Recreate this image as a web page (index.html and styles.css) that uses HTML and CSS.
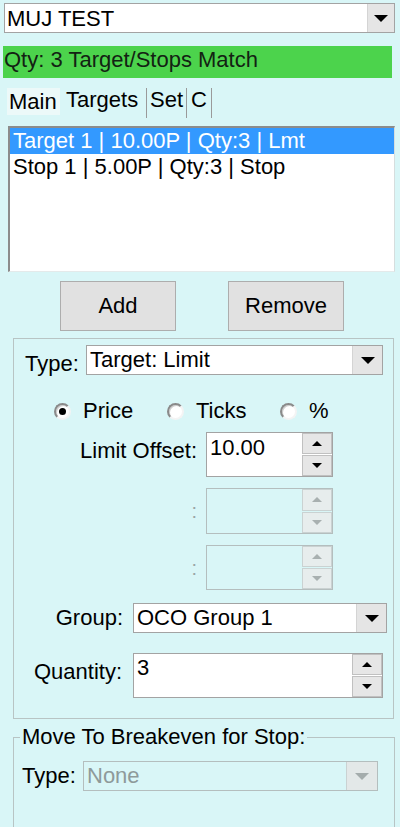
FILE: index.html
```html
<!DOCTYPE html>
<html>
<head>
<meta charset="utf-8">
<link rel="stylesheet" href="styles.css">
</head>
<body>
<div class="combo top">
  <div class="combo-text">MUJ TEST</div>
  <div class="combo-btn"><span class="tri-down"></span></div>
</div>
<div class="status">Qty: 3 Target/Stops Match</div>
<div class="tabs">
  <div class="tab tab-main">Main</div>
  <div class="tab tab-targets">Targets</div>
  <div class="tab tab-set">Set</div>
  <div class="tab tab-c">C</div>
</div>
<div class="list">
  <div class="item selected">Target 1 | 10.00P | Qty:3 | Lmt</div>
  <div class="item">Stop 1 | 5.00P | Qty:3 | Stop</div>
</div>
<div class="buttons">
  <button class="btn">Add</button>
  <button class="btn">Remove</button>
</div>
<div class="group">
  <div class="row row-type">
    <span class="lbl lbl-type">Type:</span>
    <div class="combo combo-type">
      <div class="combo-text">Target: Limit</div>
      <div class="combo-btn"><span class="tri-down"></span></div>
    </div>
  </div>
  <div class="radios">
    <div class="radio"><span class="circle checked"></span>Price</div>
    <div class="radio"><span class="circle"></span>Ticks</div>
    <div class="radio"><span class="circle"></span>%</div>
  </div>
  <div class="row row-offset">
    <span class="lbl lbl-offset">Limit Offset:</span>
    <div class="spin spin-offset">
      <div class="spin-field">10.00</div>
      <div class="spin-btns">
        <div class="spin-btn"><span class="tri-up-s"></span></div>
        <div class="spin-btn"><span class="tri-down-s"></span></div>
      </div>
    </div>
  </div>
  <div class="row row-dis1">
    <span class="lbl lbl-colon">:</span>
    <div class="spin spin-offset disabled">
      <div class="spin-field"></div>
      <div class="spin-btns">
        <div class="spin-btn"><span class="tri-up-s"></span></div>
        <div class="spin-btn"><span class="tri-down-s"></span></div>
      </div>
    </div>
  </div>
  <div class="row row-dis2">
    <span class="lbl lbl-colon">:</span>
    <div class="spin spin-offset disabled">
      <div class="spin-field"></div>
      <div class="spin-btns">
        <div class="spin-btn"><span class="tri-up-s"></span></div>
        <div class="spin-btn"><span class="tri-down-s"></span></div>
      </div>
    </div>
  </div>
  <div class="row row-group">
    <span class="lbl lbl-group">Group:</span>
    <div class="combo combo-group">
      <div class="combo-text">OCO Group 1</div>
      <div class="combo-btn"><span class="tri-down"></span></div>
    </div>
  </div>
  <div class="row row-qty">
    <span class="lbl lbl-qty">Quantity:</span>
    <div class="spin spin-qty">
      <div class="spin-field">3</div>
      <div class="spin-btns">
        <div class="spin-btn"><span class="tri-up-s"></span></div>
        <div class="spin-btn"><span class="tri-down-s"></span></div>
      </div>
    </div>
  </div>
</div>
<fieldset class="group2">
  <legend>Move To Breakeven for Stop:</legend>
  <div class="row row-be">
    <span class="lbl lbl-be">Type:</span>
    <div class="combo combo-be disabled">
      <div class="combo-text">None</div>
      <div class="combo-btn"><span class="tri-down"></span></div>
    </div>
  </div>
</fieldset>
</body>
</html>
```
FILE: styles.css
```css
* { box-sizing: border-box; }
html, body { margin: 0; padding: 0; }
body {
  background: #d9f6f7;
  font-family: "Liberation Sans", Arial, sans-serif;
  font-size: 22px;
  color: #000;
  width: 400px;
  height: 827px;
  overflow: hidden;
}

/* combo boxes */
.combo {
  display: flex;
  height: 30px;
  border: 1px solid #a3a3a3;
  background: #fff;
}
.combo-text {
  flex: 1;
  line-height: 28px;
  padding-left: 3px;
  white-space: nowrap;
  overflow: hidden;
}
.combo-btn {
  width: 30px;
  background: #e5e5e5;
  border-left: 1px solid #d4d4d4;
  display: flex;
  align-items: center;
  justify-content: center;
}
.tri-down {
  width: 0; height: 0;
  border-left: 7px solid transparent;
  border-right: 7px solid transparent;
  border-top: 7px solid #000;
}
.top { margin: 3px 5px 0 4px; }
.top .combo-text { padding-left: 2px; padding-top: 1px; }
.top .combo-btn { width: 27px; }

/* status */
.status {
  margin: 13px 0 0 3px;
  width: 389px;
  height: 32px;
  background: #4cd34c;
  color: #132213;
  line-height: 28px;
  padding-left: 1px;
  white-space: nowrap;
}

/* tabs */
.tabs {
  display: flex;
  margin-top: 10px;
  height: 30px;
  padding-left: 7px;
}
.tab {
  height: 30px;
  line-height: 24px;
  white-space: nowrap;
}
.tab-main {
  width: 53px;
  height: 27px;
  padding-left: 2px;
  line-height: 28px;
  background: #ecf9f9;
}
.tab-targets, .tab-set, .tab-c { border-right: 1px solid #9a9a9a; }
.tab-targets { width: 87px; padding-left: 6px; }
.tab-set { width: 40px; padding-left: 3px; }
.tab-c { width: 25px; padding-left: 4px; }

/* list */
.list {
  margin: 8px 0 0 8px;
  width: 387px;
  height: 146px;
  background: #fff;
  border-top: 2px solid #8c8c8c;
  border-left: 2px solid #8c8c8c;
  border-right: 1px solid #d6dede;
  border-bottom: 1px solid #e4eaea;
}
.item {
  height: 26px;
  line-height: 26px;
  padding-left: 3px;
  white-space: nowrap;
}
.item.selected { background: #3399ff; color: #fff; }

/* buttons */
.buttons {
  display: flex;
  gap: 52px;
  margin-top: 9px;
  padding-left: 60px;
}
.btn {
  width: 116px;
  height: 50px;
  background: #e1e1e1;
  border: 1px solid #adadad;
  font: inherit;
  color: #000;
  padding: 0;
}

/* group box */
.group {
  margin: 7px 0 0 13px;
  width: 381px;
  height: 381px;
  border: 1px solid #b8c4c4;
  padding-top: 6px;
}
.row { display: flex; align-items: flex-start; }
.lbl { white-space: nowrap; line-height: 30px; }

.row-type { height: 30px; padding-left: 11px; }
.lbl-type { width: 61px; padding-top: 4px; }
.combo-type { width: 297px; }

.radios {
  display: flex;
  align-items: center;
  margin-top: 23px;
  height: 26px;
  padding-left: 40px;
}
.radio {
  width: 120px;
  display: flex;
  align-items: center;
  line-height: 26px;
}
.circle {
  width: 17px;
  height: 17px;
  border-radius: 50%;
  margin-right: 12px;
  background: #fff;
  border: 2px solid;
  border-color: #8a8a8a #f4f4f4 #f4f4f4 #8a8a8a;
  box-shadow: inset 1px 1px 0 #cfcfcf;
  display: flex;
  align-items: center;
  justify-content: center;
}
.circle.checked::after {
  content: "";
  width: 7px;
  height: 7px;
  border-radius: 50%;
  background: #000;
}

.lbl-offset, .lbl-colon { width: 183px; margin-right: 9px; text-align: right; }
.lbl-offset { padding-top: 4px; }
.lbl-colon { color: #9aa6a6; line-height: 46px; font-size: 20px; }
.row-offset { margin-top: 8px; height: 45px; }
.row-dis1 { margin-top: 11px; height: 46px; }
.row-dis2 { margin-top: 11px; height: 45px; }

.spin {
  display: flex;
  height: 100%;
  border: 1px solid #a3a3a3;
  background: #fff;
}
.spin-offset { width: 127px; }
.spin-field {
  flex: 1;
  line-height: 29px;
  padding-left: 3px;
}
.spin-btns {
  width: 30px;
  display: flex;
  flex-direction: column;
  gap: 1px;
}
.spin-btn {
  flex: 1;
  background: #e6e6e6;
  border: 1px solid #c0c0c0;
  display: flex;
  align-items: center;
  justify-content: center;
}
.tri-up-s {
  width: 0; height: 0;
  border-left: 5px solid transparent;
  border-right: 5px solid transparent;
  border-bottom: 5px solid #000;
}
.tri-down-s {
  width: 0; height: 0;
  border-left: 5px solid transparent;
  border-right: 5px solid transparent;
  border-top: 5px solid #000;
}
.spin.disabled { background: transparent; border-color: #b4bebe; }
.spin.disabled .spin-btn { background: #e7eded; border-color: #cad2d2; }
.spin.disabled .tri-up-s { border-bottom-color: #a8b0b0; }
.spin.disabled .tri-down-s { border-top-color: #a8b0b0; }

.row-group { margin-top: 13px; height: 30px; }
.lbl-group { width: 109px; margin-right: 10px; text-align: right; }
.combo-group { width: 254px; }

.row-qty { margin-top: 20px; height: 45px; }
.lbl-qty { width: 108px; margin-right: 11px; text-align: right; padding-top: 4px; }
.spin-qty { width: 250px; }
.spin-qty .spin-field { line-height: 28px; }

/* second group */
.group2 {
  margin: 6px 0 0 13px;
  width: 382px;
  height: 140px;
  border: 1px solid #b8c4c4;
  padding: 0 0 0 6px;
  min-width: 0;
}
.group2 legend {
  padding: 0 2px;
  line-height: 24px;
  white-space: nowrap;
}
.row-be { margin-top: 12px; height: 30px; padding-left: 2px; }
.lbl-be { width: 61px; }
.combo-be { width: 295px; }
.combo.disabled { background: transparent; border-color: #b4bebe; }
.combo.disabled .combo-text { color: #8e9a9a; }
.combo.disabled .combo-btn { width: 31px; background: #e3e8e8; border-left-color: #cad2d2; }
.combo.disabled .tri-down { border-top-color: #a4acac; }
```
